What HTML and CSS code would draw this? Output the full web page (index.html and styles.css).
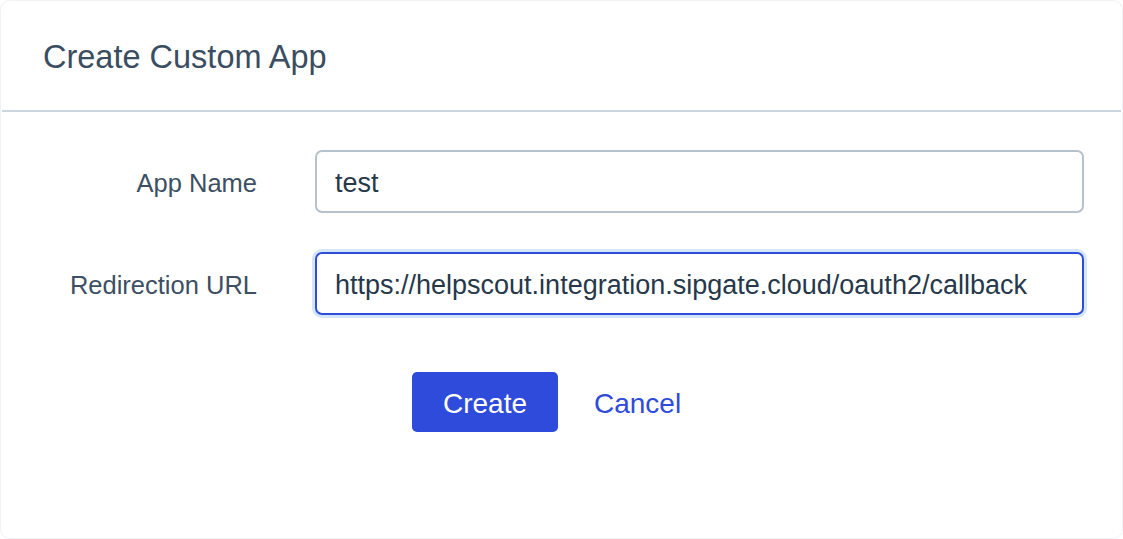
FILE: index.html
```html
<!DOCTYPE html>
<html lang="en">
<head>
<meta charset="utf-8">
<title>Create Custom App</title>
<link rel="stylesheet" href="styles.css">
</head>
<body>
<div class="modal">
  <header class="modal-header">
    <h1 class="modal-title">Create Custom App</h1>
  </header>
  <form class="form">
    <label class="label" for="app-name">App Name</label>
    <input class="input" id="app-name" type="text" value="test">
    <label class="label" for="redirect">Redirection URL</label>
    <input class="input input-focus" id="redirect" type="text" value="https://helpscout.integration.sipgate.cloud/oauth2/callback">
    <div class="actions">
      <button class="btn-primary" type="button">Create</button>
      <a class="btn-link" href="#">Cancel</a>
    </div>
  </form>
</div>
</body>
</html>
```

FILE: styles.css
```css
* { box-sizing: border-box; }
html, body { margin: 0; padding: 0; background: #ffffff; }
body {
  font-family: "Liberation Sans", Arial, sans-serif;
  width: 1123px;
  height: 539px;
  overflow: hidden;
}
.modal {
  width: 1123px;
  height: 539px;
  border: 1px solid #f1f2f5;
  border-radius: 10px;
  background: #fff;
}
.modal-header {
  height: 111px;
  margin: 0 1px;
  border-bottom: 2px solid #ccd6e1;
  display: flex;
  align-items: center;
  padding-left: 41px;
  padding-top: 4px;
}
.modal-title {
  margin: 0;
  font-weight: 400;
  font-size: 32.5px;
  color: #3a4d61;
  letter-spacing: 0;
}
.form {
  display: grid;
  grid-template-columns: 256px 769px;
  column-gap: 58px;
  row-gap: 39px;
  padding-top: 38px;
  align-items: center;
}
.label {
  text-align: right;
  font-size: 25.5px;
  color: #3d4f62;
  padding-top: 4px;
}
.input {
  height: 63px;
  width: 769px;
  border: 2px solid #b5c1cd;
  border-radius: 7px;
  padding: 4px 18px 0;
  font-family: "Liberation Sans", Arial, sans-serif;
  font-size: 27px;
  color: #26384a;
  background: #fff;
  outline: none;
}
.input-focus {
  border-color: #2d4ddb;
  box-shadow: 0 0 0 3px #d5e6fb;
}
.actions {
  grid-column: 2;
  display: flex;
  align-items: center;
  gap: 36px;
  margin-left: 97px;
  margin-top: 18px;
}
.btn-primary {
  width: 146px;
  height: 60px;
  border: none;
  border-radius: 5px;
  background: #2f4bdc;
  color: #fff;
  font-family: "Liberation Sans", Arial, sans-serif;
  font-size: 28px;
  padding: 4px 0 0;
}
.btn-link {
  font-size: 28px;
  color: #2f4bdc;
  text-decoration: none;
  padding-top: 4px;
}
```
